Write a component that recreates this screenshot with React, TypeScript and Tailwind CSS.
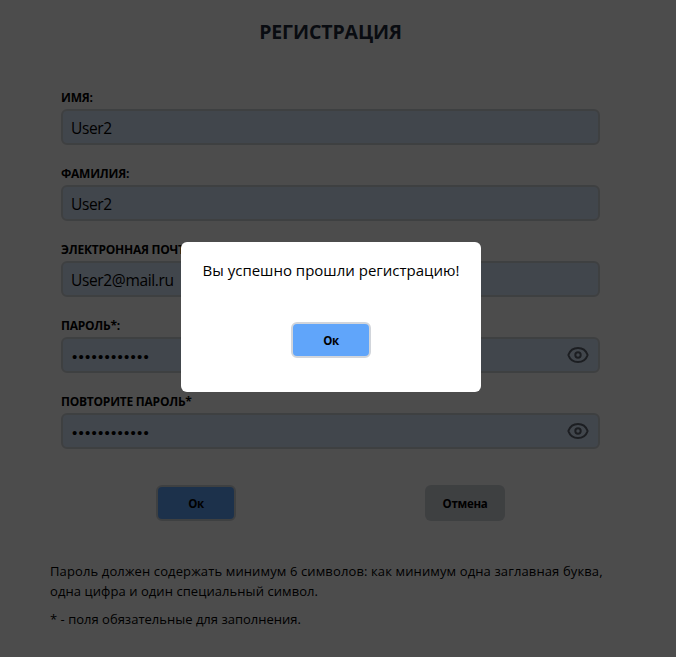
type FieldProps = { label: string; value: string; secret?: boolean };

function EyeIcon() {
  return (
    <svg viewBox="0 0 24 24" className="h-6 w-6 text-[#5f6672]" fill="none" stroke="currentColor" strokeWidth="2" strokeLinecap="round" strokeLinejoin="round">
      <path d="M2.5 12.322a1.012 1.012 0 0 1 0-.639C3.9 7.9 7.6 5 12 5c4.4 0 8.1 2.9 9.5 6.683.07.207.07.431 0 .639C20.1 16.1 16.4 19 12 19c-4.4 0-8.1-2.9-9.5-6.678Z" />
      <circle cx="12" cy="12" r="2.7" />
    </svg>
  );
}

function Field({ label, value, secret = false }: FieldProps) {
  return (
    <div className="flex h-[76px] flex-col">
      <label className="mt-px h-[23px] text-xs leading-6 font-bold tracking-[-0.24px] whitespace-nowrap text-black">{label}</label>
      <div className="flex h-9 w-full items-center justify-between rounded-md border-2 border-[#d1d5db] bg-[#dbeafe] pr-2 pl-2">
        <input
          readOnly
          type={secret ? 'password' : 'text'}
          value={value}
          className={
            secret
              ? "h-6 min-w-0 flex-1 bg-transparent pt-0.5 pl-px font-['Liberation_Sans',sans-serif] text-[15px] tracking-[1.25px] text-black outline-none"
              : 'h-6 min-w-0 flex-1 bg-transparent pt-0.5 text-[15.5px] tracking-[-0.35px] text-black outline-none'
          }
        />
        {secret && <EyeIcon />}
      </div>
    </div>
  );
}

function OkButton() {
  return (
    <button className="h-9 w-20 rounded-md border-2 border-[#d1d5db] bg-[#60a5fa] pt-0.5 text-[11.5px] font-bold tracking-[-0.3px] text-black">Ок</button>
  );
}

export default function App() {
  return (
    <div className="relative h-[657px] w-[676px] overflow-hidden bg-white font-['Open_Sans','Noto_Sans',sans-serif]">
      <div className="flex w-[661px] flex-col">
        <h1 className="mt-[18px] h-7 text-center text-[19.5px] leading-7 font-bold tracking-[-0.1px] text-[#1e293b]">РЕГИСТРАЦИЯ</h1>
        <div className="mt-[39px] ml-[61px] w-[539px]">
          <Field label="ИМЯ:" value="User2" />
          <Field label="ФАМИЛИЯ:" value="User2" />
          <Field label="ЭЛЕКТРОННАЯ ПОЧТА*:" value="User2@mail.ru" />
          <Field label="ПАРОЛЬ*:" value="Password#123" secret />
          <Field label="ПОВТОРИТЕ ПАРОЛЬ*" value="Password#123" secret />
        </div>
        <div className="mt-5 flex gap-[189px] pl-[156px]">
          <OkButton />
          <button className="h-9 w-20 rounded-md bg-[#d1d5db] pt-0.5 text-[11.5px] font-bold tracking-[-0.3px] text-black">Отмена</button>
        </div>
        <div className="mt-10 ml-[50px] text-[13px] leading-5 tracking-[0.12px] whitespace-nowrap text-black">
          <p>Пароль должен содержать минимум 6 символов: как минимум одна заглавная буква,</p>
          <p className="tracking-[0.07px]">одна цифра и один специальный символ.</p>
          <p className="mt-2 tracking-[0.01px]">* - поля обязательные для заполнения.</p>
        </div>
      </div>
      <div className="absolute inset-0 bg-black/70" />
      <div className="absolute top-[242px] left-[181px] flex h-[150px] w-[300px] flex-col items-center rounded-md bg-white pt-4">
        <p className="mb-10 text-[15px] leading-6 whitespace-nowrap text-black">Вы успешно прошли регистрацию!</p>
        <OkButton />
      </div>
    </div>
  );
}
